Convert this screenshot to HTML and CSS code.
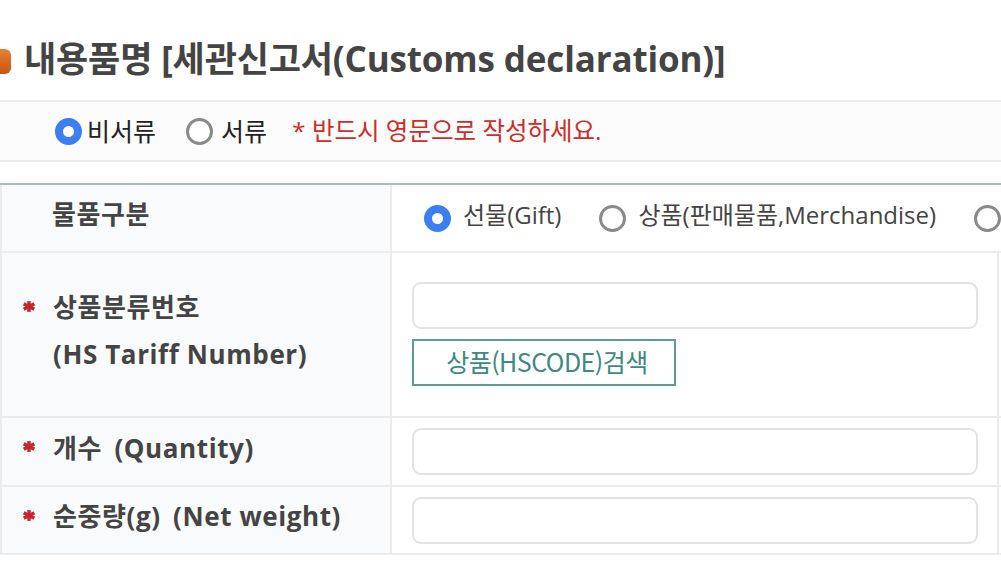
FILE: index.html
```html
<!DOCTYPE html>
<html lang="ko">
<head>
<meta charset="utf-8">
<title>내용품명</title>
<link rel="stylesheet" href="styles.css">
</head>
<body>
<div class="page">
  <h2 class="title"><span class="bullet"></span>내용품명 [세관신고서(Customs declaration)]</h2>

  <div class="doc-type">
    <label class="radio-item"><span class="radio checked"></span><span class="radio-text">비서류</span></label>
    <label class="radio-item item-2"><span class="radio"></span><span class="radio-text">서류</span></label>
    <span class="notice">* 반드시 영문으로 작성하세요.</span>
  </div>

  <div class="form-table">
    <div class="row row-first">
      <div class="th"><span class="label">물품구분</span></div>
      <div class="td td-open">
        <label class="radio-item"><span class="radio checked"></span><span class="opt-text">선물(Gift)</span></label>
        <label class="radio-item"><span class="radio"></span><span class="opt-text">상품(판매물품,Merchandise)</span></label>
        <label class="radio-item" aria-label="기타"><span class="radio"></span></label>
      </div>
    </div>
    <div class="row row-hs">
      <div class="th th-top">
        <div class="label-line"><span class="req"><svg width="12" height="11" viewBox="0 0 12 11"><g stroke="#c9252b" stroke-width="3.4" stroke-linecap="square"><line x1="6" y1="1.8" x2="6" y2="9.2"/><line x1="2.2" y1="3.6" x2="9.8" y2="7.4"/><line x1="2.2" y1="7.4" x2="9.8" y2="3.6"/></g></svg></span><span class="label">상품분류번호</span></div>
        <div class="label-line"><span class="req-space"></span><span class="label">(HS Tariff Number)</span></div>
      </div>
      <div class="td td-stack">
        <input class="field" type="text">
        <button class="btn-hs" type="button">상품(HSCODE)검색</button>
      </div>
    </div>
    <div class="row row-qty">
      <div class="th">
        <div class="label-line"><span class="req"><svg width="12" height="11" viewBox="0 0 12 11"><g stroke="#c9252b" stroke-width="3.4" stroke-linecap="square"><line x1="6" y1="1.8" x2="6" y2="9.2"/><line x1="2.2" y1="3.6" x2="9.8" y2="7.4"/><line x1="2.2" y1="7.4" x2="9.8" y2="3.6"/></g></svg></span><span class="label">개수 <span class="en">(Quantity)</span></span></div>
      </div>
      <div class="td"><input class="field" type="text"></div>
    </div>
    <div class="row row-last">
      <div class="th">
        <div class="label-line"><span class="req"><svg width="12" height="11" viewBox="0 0 12 11"><g stroke="#c9252b" stroke-width="3.4" stroke-linecap="square"><line x1="6" y1="1.8" x2="6" y2="9.2"/><line x1="2.2" y1="3.6" x2="9.8" y2="7.4"/><line x1="2.2" y1="7.4" x2="9.8" y2="3.6"/></g></svg></span><span class="label">순중량(g) <span class="en">(Net weight)</span></span></div>
      </div>
      <div class="td"><input class="field" type="text"></div>
    </div>
  </div>
</div>
</body>
</html>
```

FILE: styles.css
```css
* { box-sizing: border-box; }

html, body {
  margin: 0;
  padding: 0;
  background: #ffffff;
}

body {
  width: 1001px;
  height: 586px;
  overflow: hidden;
  font-family: "Open Sans", "Noto Sans CJK KR", sans-serif;
  color: #444;
}

.page {
  width: 1001px;
  padding-top: 32px;
}

.title {
  margin: 0;
  height: 48px;
  display: flex;
  align-items: center;
  font-size: 35px;
  font-weight: 700;
  color: #444;
  letter-spacing: -0.15px;
  white-space: nowrap;
}

.bullet {
  display: inline-block;
  width: 11px;
  height: 25px;
  border-radius: 0 6px 6px 0;
  background: linear-gradient(180deg, #e88436 0%, #d4641c 60%, #c8560f 100%);
  margin-right: 13px;
  margin-top: 10px;
}

.doc-type {
  margin-top: 20px;
  height: 62px;
  border: 2px solid #ececec;
  border-left: none;
  border-right: none;
  background: #fcfcfc;
  display: flex;
  align-items: center;
  padding-left: 55px;
  white-space: nowrap;
}

.radio-item {
  display: inline-flex;
  align-items: center;
}

.doc-type .radio-item { margin-right: 30px; }
.doc-type .item-2 { margin-right: 25px; }

.radio {
  width: 27px;
  height: 27px;
  border-radius: 50%;
  border: 3px solid #8a8a8a;
  background: #fff;
  flex: none;
}

.radio.checked {
  border: 8px solid #3b7ff2;
}

.radio-text {
  font-size: 25px;
  color: #222;
  margin-left: 5px;
  margin-top: -3px;
}

.item-2 .radio-text { margin-left: 8px; }

.notice {
  font-size: 24.5px;
  color: #cf2d28;
  margin-top: -3px;
}

.form-table {
  margin-top: 21px;
  border-top: 2px solid #a9bdbd;
  width: 1001px;
}

.row {
  display: grid;
  grid-template-columns: 392px 607px;
  border-bottom: 2px solid #ebebeb;
}

.th {
  background: #f9fafb;
  border-left: 2px solid #ebebeb;
  border-right: 2px solid #ebebeb;
  display: flex;
  flex-direction: column;
  justify-content: center;
  padding-left: 20px;
  padding-bottom: 10px;
}

.td {
  border-right: 2px solid #ebebeb;
  display: flex;
  align-items: center;
  padding: 0 19px 0 20px;
}

.row-first { height: 68px; }
.row-first .th { padding-left: 50px; padding-bottom: 10px; }
.td-open {
  border-right: none;
  white-space: nowrap;
  padding-left: 32px;
  overflow: visible;
}
.td-open .radio-item { margin-right: 38px; flex: none; }

.opt-text {
  font-size: 24px;
  color: #444;
  margin-left: 12px;
  margin-top: -10px;
}

.row-hs { height: 165px; }
.th-top { justify-content: flex-start; padding-top: 29px; }

.td-stack {
  flex-direction: column;
  align-items: flex-start;
  justify-content: flex-start;
  padding-top: 29px;
}

.row-qty { height: 69px; }
.row-last { height: 68px; }

.label-line {
  display: flex;
  align-items: center;
  height: 48px;
}

.req {
  width: 31px;
  display: inline-flex;
  align-items: center;
  padding-left: 1px;
}

.req-space {
  width: 31px;
  display: inline-block;
}

.label {
  font-size: 26px;
  font-weight: 700;
  color: #444;
  letter-spacing: 0.6px;
  white-space: nowrap;
}

.en {
  margin-left: 5px;
}

.field {
  flex: none;
  width: 566px;
  height: 47px;
  border: 2px solid #e3e3e3;
  border-radius: 9px;
  background: #fff;
  outline: none;
  margin: 0;
}

.btn-hs {
  flex: none;
  margin-top: 10px;
  width: 264px;
  height: 47px;
  border: 2px solid #5c9d95;
  background: #fff;
  color: #3c8a80;
  font-family: "Noto Sans CJK KR", "Noto Sans", sans-serif;
  font-size: 25px;
  letter-spacing: -0.5px;
  padding: 0 0 4px 6px;
  border-radius: 0;
}
```
